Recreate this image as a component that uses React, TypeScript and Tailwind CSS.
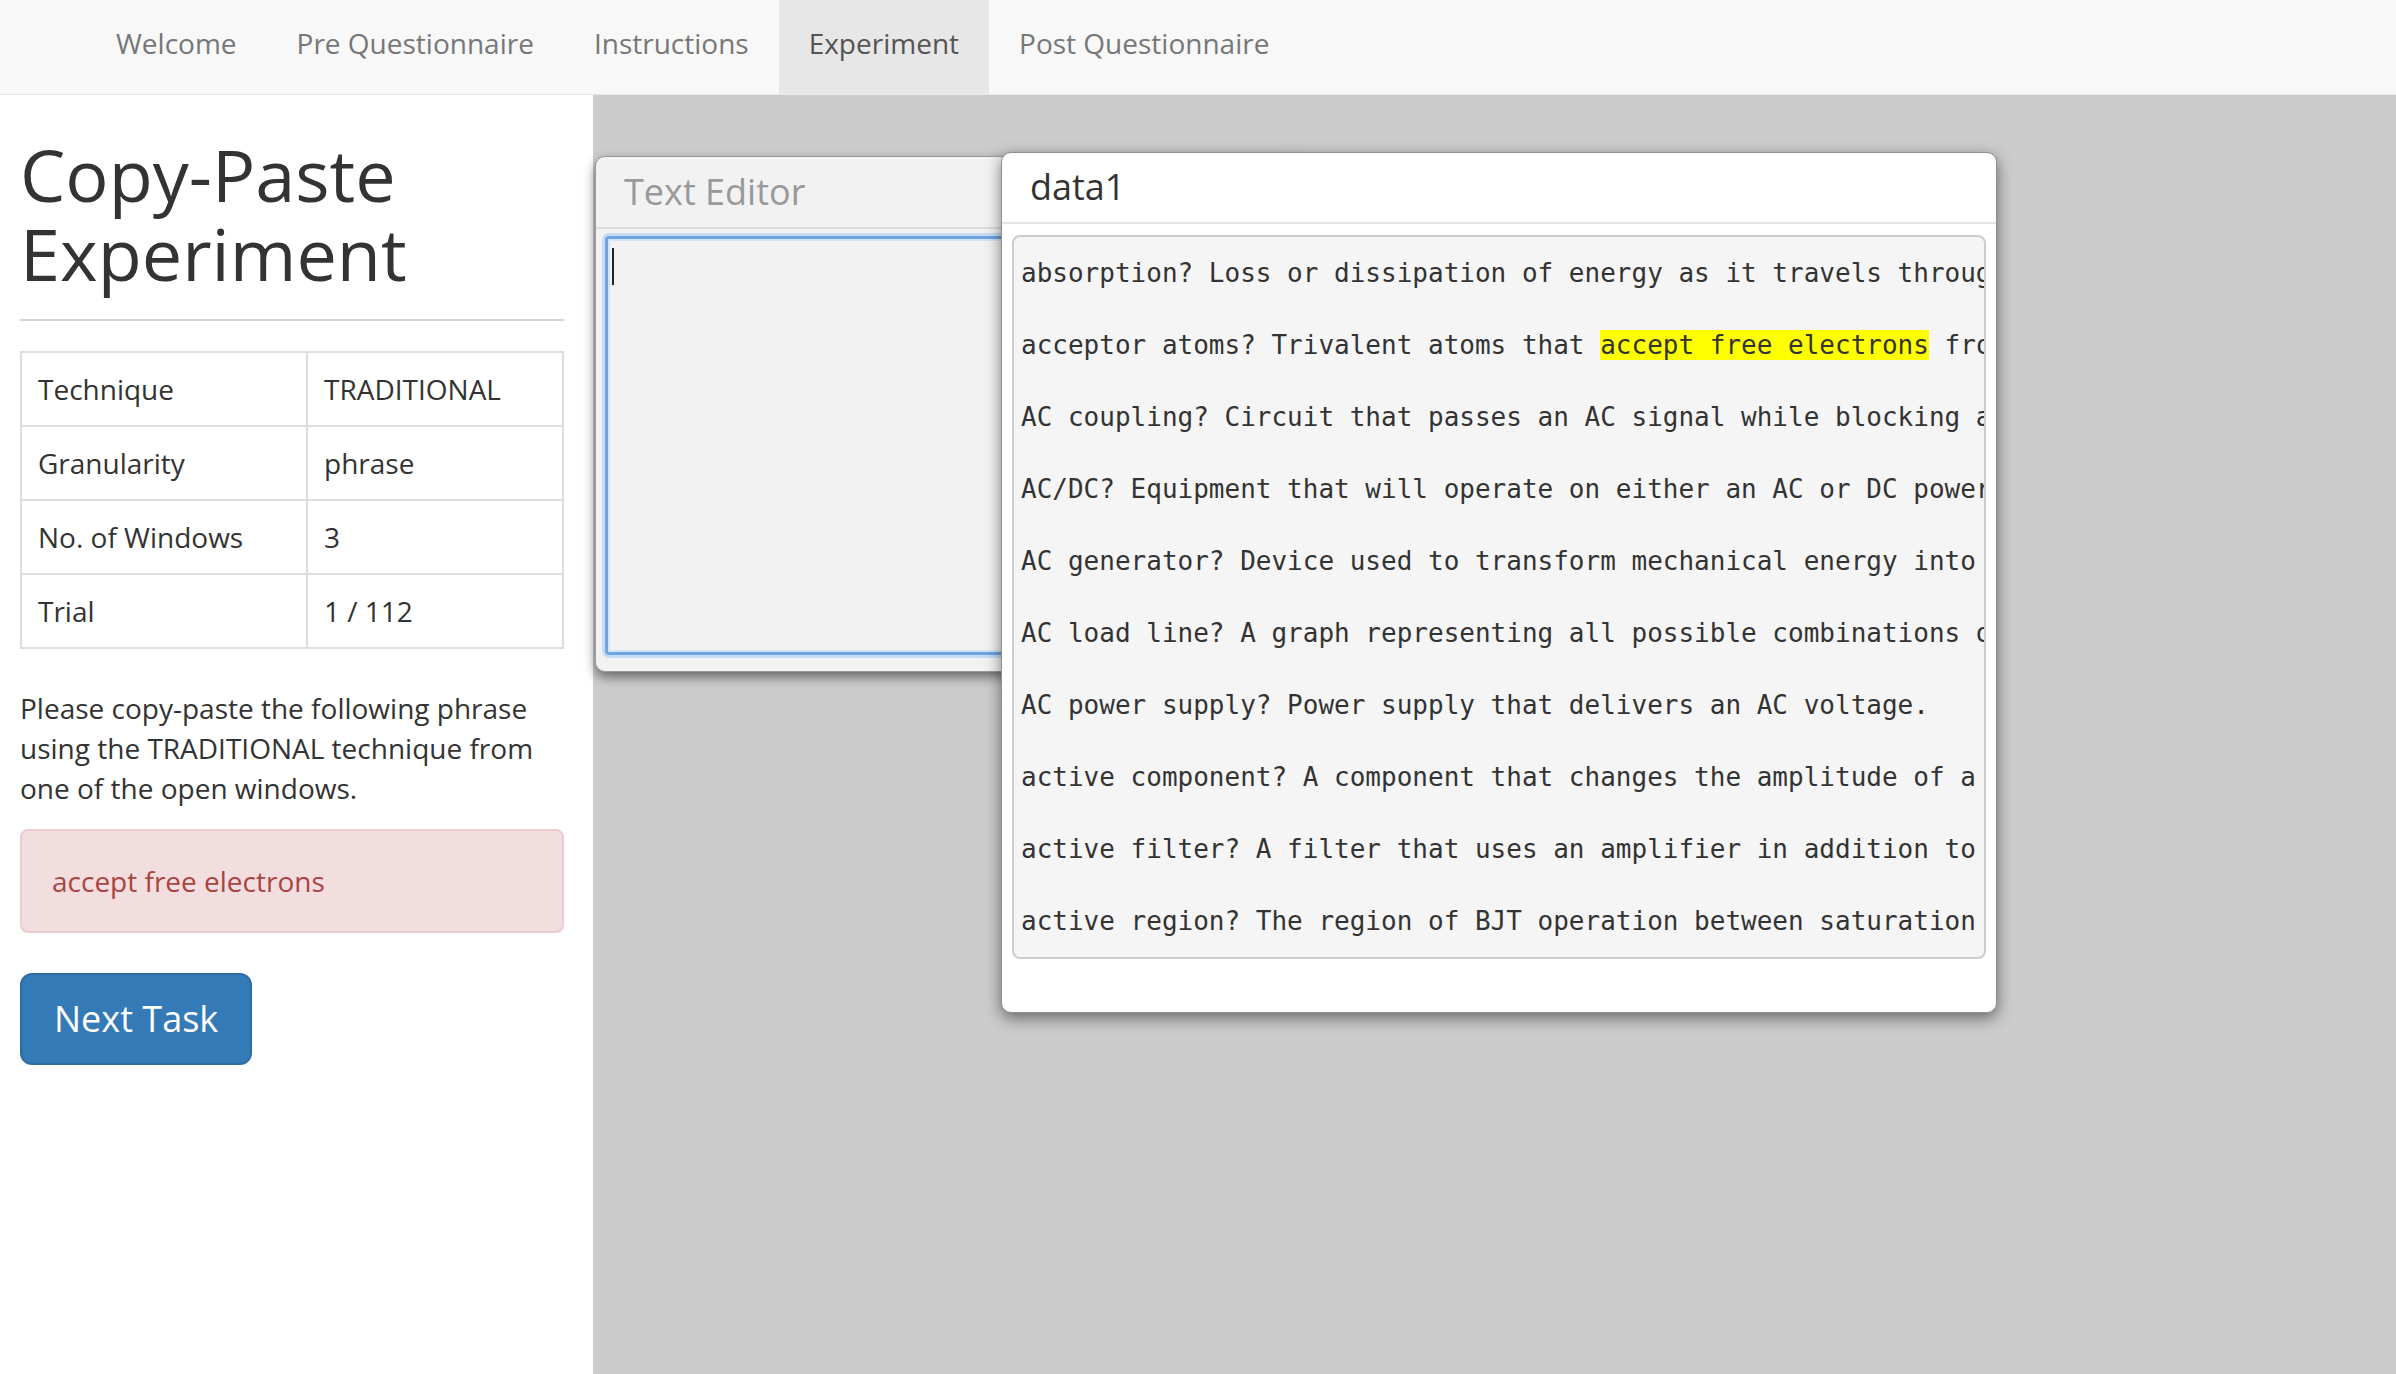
import React from "react";

const navItems = [
  "Welcome",
  "Pre Questionnaire",
  "Instructions",
  "Experiment",
  "Post Questionnaire",
];

const details: [string, string][] = [
  ["Technique", "TRADITIONAL"],
  ["Granularity", "phrase"],
  ["No. of Windows", "3"],
  ["Trial", "1 / 112"],
];

type Entry = { pre: string; mark?: string; post?: string };

const glossary: Entry[] = [
  { pre: "absorption? Loss or dissipation of energy as it travels through a medium." },
  {
    pre: "acceptor atoms? Trivalent atoms that ",
    mark: "accept free electrons",
    post: " from the crystal lattice.",
  },
  { pre: "AC coupling? Circuit that passes an AC signal while blocking a DC voltage." },
  { pre: "AC/DC? Equipment that will operate on either an AC or DC power source." },
  { pre: "AC generator? Device used to transform mechanical energy into electrical energy." },
  { pre: "AC load line? A graph representing all possible combinations of current and voltage." },
  { pre: "AC power supply? Power supply that delivers an AC voltage." },
  { pre: "active component? A component that changes the amplitude of a signal." },
  { pre: "active filter? A filter that uses an amplifier in addition to reactive components." },
  { pre: "active region? The region of BJT operation between saturation and cutoff." },
];

const Navbar = () => (
  <div className="h-[95px] shrink-0 bg-[#f8f8f8] border-b border-[#e7e7e7] flex pl-[86px]">
    {navItems.map((item) => {
      const active = item === "Experiment";
      return (
        <div
          key={item}
          className={`h-full px-[30px] pt-[23px] text-[28px] leading-[40px] ${
            active ? "bg-[#e7e7e7] text-[#555]" : "text-[#777]"
          }`}
        >
          {item}
        </div>
      );
    })}
  </div>
);

const TaskPanel = () => (
  <div className="w-[593px] shrink-0 bg-white pl-[20px] pr-[29px] text-[#333]">
    <h1 className="mt-[40px] mb-[26px] text-[72px] leading-[79px] font-normal">
      Copy-Paste Experiment
    </h1>
    <div className="h-[2px] bg-[#d6d6d6]" />

    <table className="mt-[30px] w-full border-collapse text-[28px] leading-[40px]">
      <tbody>
        {details.map(([k, v]) => (
          <tr key={k}>
            <td className="w-[286px] border-2 border-[#ddd] px-[16px] py-[16px]">{k}</td>
            <td className="border-2 border-[#ddd] px-[16px] py-[16px]">{v}</td>
          </tr>
        ))}
      </tbody>
    </table>

    <p className="mt-[39px] mb-[21px] text-[28px] leading-[40px]">
      Please copy-paste the following phrase
      <br />
      using the TRADITIONAL technique from
      <br />
      one of the open windows.
    </p>

    <div className="rounded-[8px] border-2 border-[#ebccd1] bg-[#f2dede] px-[30px] py-[30px] text-[28px] leading-[40px] text-[#a94442]">
      accept free electrons
    </div>

    <button className="mt-[40px] h-[92px] rounded-[12px] border-2 border-[#2e6da4] bg-[#337ab7] px-[32px] text-[36px] leading-[48px] text-white">
      Next Task
    </button>
  </div>
);

const TextEditorWindow = () => (
  <div className="absolute left-[2px] top-[61px] w-[700px] h-[516px] rounded-[10px] border border-[#9a9a9a] bg-[#f2f2f2] shadow-[0_5px_12px_rgba(0,0,0,0.5)] overflow-hidden flex flex-col">
    <div className="h-[72px] shrink-0 border-b-2 border-[#dcdcdc] pl-[28px] pt-[10px] text-[36px] leading-[50px] text-[#999]">
      Text Editor
    </div>
    <div className="ml-[9px] mt-[7px] h-[419px] w-[720px] rounded-[4px] border-[3px] border-[#6ea4e2] bg-[#f2f2f2] pl-[4px] pt-[9px] shadow-[0_0_0_3px_#c7dcf4,inset_0_0_0_2px_#d2e4f8]">
      <div className="w-[2px] h-[37px] bg-[#222]" />
    </div>
  </div>
);

const DataWindow = () => (
  <div className="absolute left-[408px] top-[57px] w-[996px] h-[861px] rounded-[10px] border border-[#8f8f8f] bg-white shadow-[0_5px_16px_rgba(0,0,0,0.5)] overflow-hidden">
    <div className="h-[71px] border-b-2 border-[#e5e5e5] pl-[28px] pt-[9px] text-[36px] leading-[50px] text-[#333]">
      data1
    </div>
    <div className="mx-[10px] mt-[11px] h-[724px] rounded-[8px] border-2 border-[#ccc] bg-[#f5f5f5] pl-[7px] py-[18px] overflow-hidden">
      <div className="flex flex-col gap-[36px] font-['DejaVu_Sans_Mono',monospace] text-[26px] leading-[36px] text-[#333] whitespace-pre">
        {glossary.map((e, i) => (
          <div key={i} className="h-[36px]">
            {e.pre}
            {e.mark && <span className="bg-[#ffff00]">{e.mark}</span>}
            {e.post}
          </div>
        ))}
      </div>
    </div>
  </div>
);

export default function App() {
  return (
    <div className="h-[1374px] w-[2396px] flex flex-col font-['Open_Sans',sans-serif] overflow-hidden">
      <Navbar />
      <div className="flex flex-1">
        <TaskPanel />
        <div className="relative flex-1 bg-[#cccccc]">
          <TextEditorWindow />
          <DataWindow />
        </div>
      </div>
    </div>
  );
}
